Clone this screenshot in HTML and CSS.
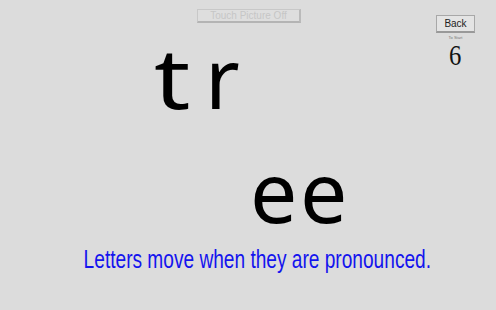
FILE: index.html
```html
<!DOCTYPE html>
<html>
<head>
<meta charset="utf-8">
<link rel="stylesheet" href="styles.css">
</head>
<body>
<div class="screen">
  <div class="top">
    <button class="toggle">Touch Picture Off</button>
  </div>
  <div class="side">
    <button class="back">Back</button>
    <div class="sub">To Start</div>
    <div class="count">6</div>
  </div>
  <div class="stage">
    <span class="letter l-t">t</span>
    <span class="letter l-r">r</span>
    <span class="letter l-e1">e</span>
    <span class="letter l-e2">e</span>
  </div>
  <div class="footer">
    <p class="caption">Letters move when they are pronounced.</p>
  </div>
</div>
</body>
</html>
```
FILE: styles.css
```css
html, body { margin: 0; padding: 0; }
body { background: #dcdcdc; width: 496px; height: 310px; overflow: hidden; }
.screen { position: relative; width: 496px; height: 310px; font-family: "Liberation Sans", Arial, sans-serif; }
.top { display: flex; justify-content: center; padding-top: 9px; padding-left: 2px; height: 14px; }
.toggle {
  font-family: "Liberation Sans", Arial, sans-serif;
  font-size: 10px; color: #c6c6c6; background: #dedede;
  border: 1px solid #c8c8c8; border-bottom: 2px solid #b4b4b4; border-right: 2px solid #bababa;
  width: 104px; height: 14px; padding: 0; line-height: 11px;
}
.side { position: absolute; top: 15px; left: 436px; width: 39px; display: flex; flex-direction: column; align-items: center; }
.back {
  font-family: "Liberation Sans", Arial, sans-serif; font-size: 10px; color: #222;
  background: #e4e4e4; border: 1px solid #a8a8a8; border-bottom: 2px solid #999;
  width: 39px; height: 18px; padding: 0;
}
.sub { font-size: 4px; color: #777; margin-top: 2px; line-height: 5px; }
.count { font-family: "Liberation Serif", serif; font-size: 29px; line-height: 29px; color: #111; margin-top: 1px; transform: scaleX(0.85); }
.stage { position: absolute; inset: 0; }
.letter { position: absolute; font-family: "Noto Sans", sans-serif; color: #000; line-height: 1; font-size: 84px; }
.l-t { left: 157px; top: 35px; transform: scaleX(1.2); }
.l-r { left: 205px; top: 35px; }
.l-e1 { left: 250px; top: 149px; }
.l-e2 { left: 300px; top: 149px; }
.footer { display: flex; justify-content: center; padding-top: 223px; }
.caption { margin: 0 0 0 19px; color: #1414ee; font-size: 26px; line-height: 26px; transform: scaleX(0.735); white-space: nowrap; }
```
